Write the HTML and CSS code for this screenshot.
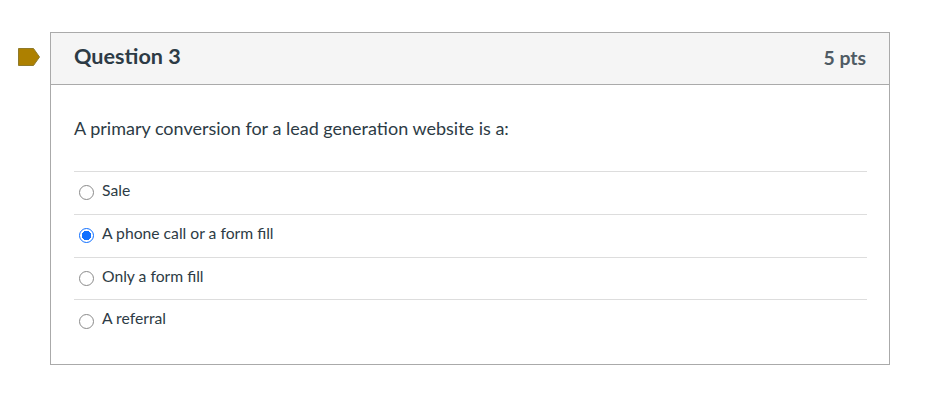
FILE: index.html
```html
<!DOCTYPE html>
<html lang="en">
<head>
  <meta charset="UTF-8">
  <meta name="viewport" content="width=device-width, initial-scale=1.0">
  <title>Question 3</title>
  <link rel="stylesheet" href="styles.css">
</head>
<body>
  <div class="question-row">
    <svg class="flag" width="22" height="18" viewBox="0 0 22 18" aria-hidden="true">
      <path d="M.5.500H15.500L21.500 9l-6 8.500H.5z" fill="#ad8000" stroke="#8f7a2a"/>
    </svg>
    <div class="question">
      <div class="question-header">
        <h2>Question 3</h2>
        <span class="points">5 pts</span>
      </div>
      <div class="question-body">
        <p class="question-text">A primary conversion for a lead generation website is a:</p>
        <div class="answers">
          <label class="answer"><input type="radio" name="q3"><span>Sale</span></label>
          <label class="answer"><input type="radio" name="q3" checked><span>A phone call or a form fill</span></label>
          <label class="answer"><input type="radio" name="q3"><span>Only a form fill</span></label>
          <label class="answer"><input type="radio" name="q3"><span>A referral</span></label>
        </div>
      </div>
    </div>
  </div>
</body>
</html>
```

FILE: styles.css
```css
body {
  margin: 0;
  padding: 32px 58px 36px 18px;
  background-color: white;
  font-family: Lato, sans-serif;
  color: #2d3b45;
}
.question-row {
  display: flex;
  align-items: flex-start;
}
.flag {
  flex: none;
  margin-top: 16px;
  margin-right: 10px;
}
.question {
  flex: 1;
  border: 1px solid #aaa;
  height: 331px;
}
.question-header {
  display: flex;
  justify-content: space-between;
  align-items: center;
  height: 46px;
  padding: 0 23px 5px;
  background-color: #f5f5f5;
  border-bottom: 1px solid #aaa;
}
h2 {
  margin: 0;
  font-size: 21.6px;
  font-weight: 700;
}
.points {
  font-size: 19.4px;
  font-weight: 700;
  color: #4f5b64;
  margin-top: 2px;
}
.question-body {
  padding: 0 22px 0 23px;
}
.question-text {
  margin: 32px 0 32px;
  font-size: 18px;
  line-height: 22px;
}
.answer {
  display: flex;
  align-items: center;
  height: 41.8px;
  border-top: 1px solid #ddd;
  font-size: 15.7px;
}
.answer span {
  margin-bottom: 5.8px;
}
input {
  appearance: none;
  box-sizing: border-box;
  width: 15px;
  height: 15px;
  margin: 0 8px 0 5px;
  border: 1.5px solid #8a8a8a;
  border-radius: 50%;
  background-color: white;
}
input:checked {
  border-color: #0f6fff;
  background: radial-gradient(circle, #0f6fff 0 4.5px, white 5px);
}
```
